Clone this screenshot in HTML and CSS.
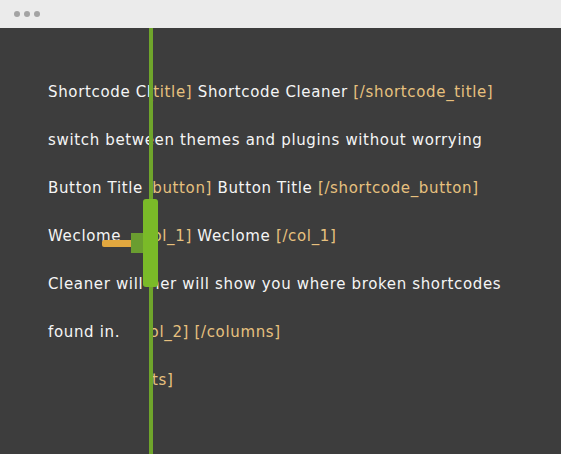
FILE: index.html
```html
<!DOCTYPE html>
<html lang="en">
<head>
<meta charset="utf-8">
<title>Shortcode Cleaner</title>
<link rel="stylesheet" href="styles.css">
</head>
<body>
<div class="window">
  <div class="titlebar">
    <span class="dot"></span><span class="dot"></span><span class="dot"></span>
  </div>
  <div class="stage">
    <div class="pane before">
      <div class="text">
        <p class="line">Shortcode Cleaner</p>
        <p class="line">switch between themes and plugins without worrying</p>
        <p class="line">Button Title</p>
        <p class="line">Weclome</p>
        <p class="line">Cleaner will show you where broken shortcodes</p>
        <p class="line">found in.</p>
        <p class="line"></p>
      </div>
    </div>
    <div class="pane after">
      <div class="text">
        <p class="line l1"><span class="sc">[shortcode_title]</span> Shortcode Cleaner <span class="sc">[/shortcode_title]</span></p>
        <p class="line l2">switch between themes and plugins without worrying</p>
        <p class="line l3"><span class="sc">[shortcode_button]</span> Button Title <span class="sc">[/shortcode_button]</span></p>
        <p class="line l4"><span class="sc">[columns] [col_1]</span> Weclome <span class="sc">[/col_1]</span></p>
        <p class="line l5"><span class="sc">[col_2]</span> Cleaner will show you where broken shortcodes</p>
        <p class="line l6">found in. <span class="sc">[/col_2] [/columns]</span></p>
        <p class="line l7"><span class="sc">[/shortcode_lists]</span></p>
      </div>
    </div>
    <div class="divider">
      <div class="handle">
        <span class="grip"></span>
        <span class="arrow"></span>
      </div>
    </div>
  </div>
</div>
</body>
</html>
```
FILE: styles.css
```css
html, body {
  margin: 0;
  padding: 0;
}
body {
  background: #3d3d3d;
  font-family: "DejaVu Sans", "Noto Sans", sans-serif;
}
.window {
  width: 561px;
  height: 454px;
  display: flex;
  flex-direction: column;
  overflow: hidden;
}
.titlebar {
  height: 28px;
  flex: none;
  background: #ebebeb;
  display: flex;
  align-items: center;
  gap: 4px;
  padding-left: 14px;
}
.dot {
  width: 6px;
  height: 6px;
  border-radius: 50%;
  background: #a3a3a3;
}
.stage {
  position: relative;
  flex: 1;
  display: flex;
  background: #3d3d3d;
}
.pane {
  overflow: hidden;
  padding-top: 40px;
}
.before {
  flex: none;
  width: 150px;
  box-sizing: border-box;
  padding-left: 48px;
}
.after {
  flex: 1;
}
.after .text {
  margin-left: -102px;
}
.text {
  white-space: nowrap;
  font-size: 15px;
  letter-spacing: 0.65px;
  color: #f5f5f5;
}
.line {
  margin: 0;
  height: 48px;
  line-height: 48px;
}
.l1 { padding-left: 10px; }
.l3 { padding-left: 9px; }
.l4 { padding-left: 3px; }
.l5 { padding-left: 6px; }
.l6 { padding-left: 3px; }
.l7 { margin-left: -15px; }
.sc {
  color: #e7c17f;
}
.divider {
  position: absolute;
  top: 0;
  bottom: 0;
  left: 149px;
  width: 4px;
  background: #6fa52b;
}
.handle {
  position: absolute;
  left: -6px;
  top: 171px;
  width: 15px;
  height: 88px;
  border-radius: 3px;
  background: #7aba28;
}
.grip {
  position: absolute;
  left: -12px;
  top: 34px;
  width: 12px;
  height: 20px;
  background: #6a9d30;
}
.arrow {
  position: absolute;
  left: -41px;
  top: 41px;
  width: 29px;
  height: 7px;
  border-radius: 2px 0 0 2px;
  background: #e2a83f;
}
```
